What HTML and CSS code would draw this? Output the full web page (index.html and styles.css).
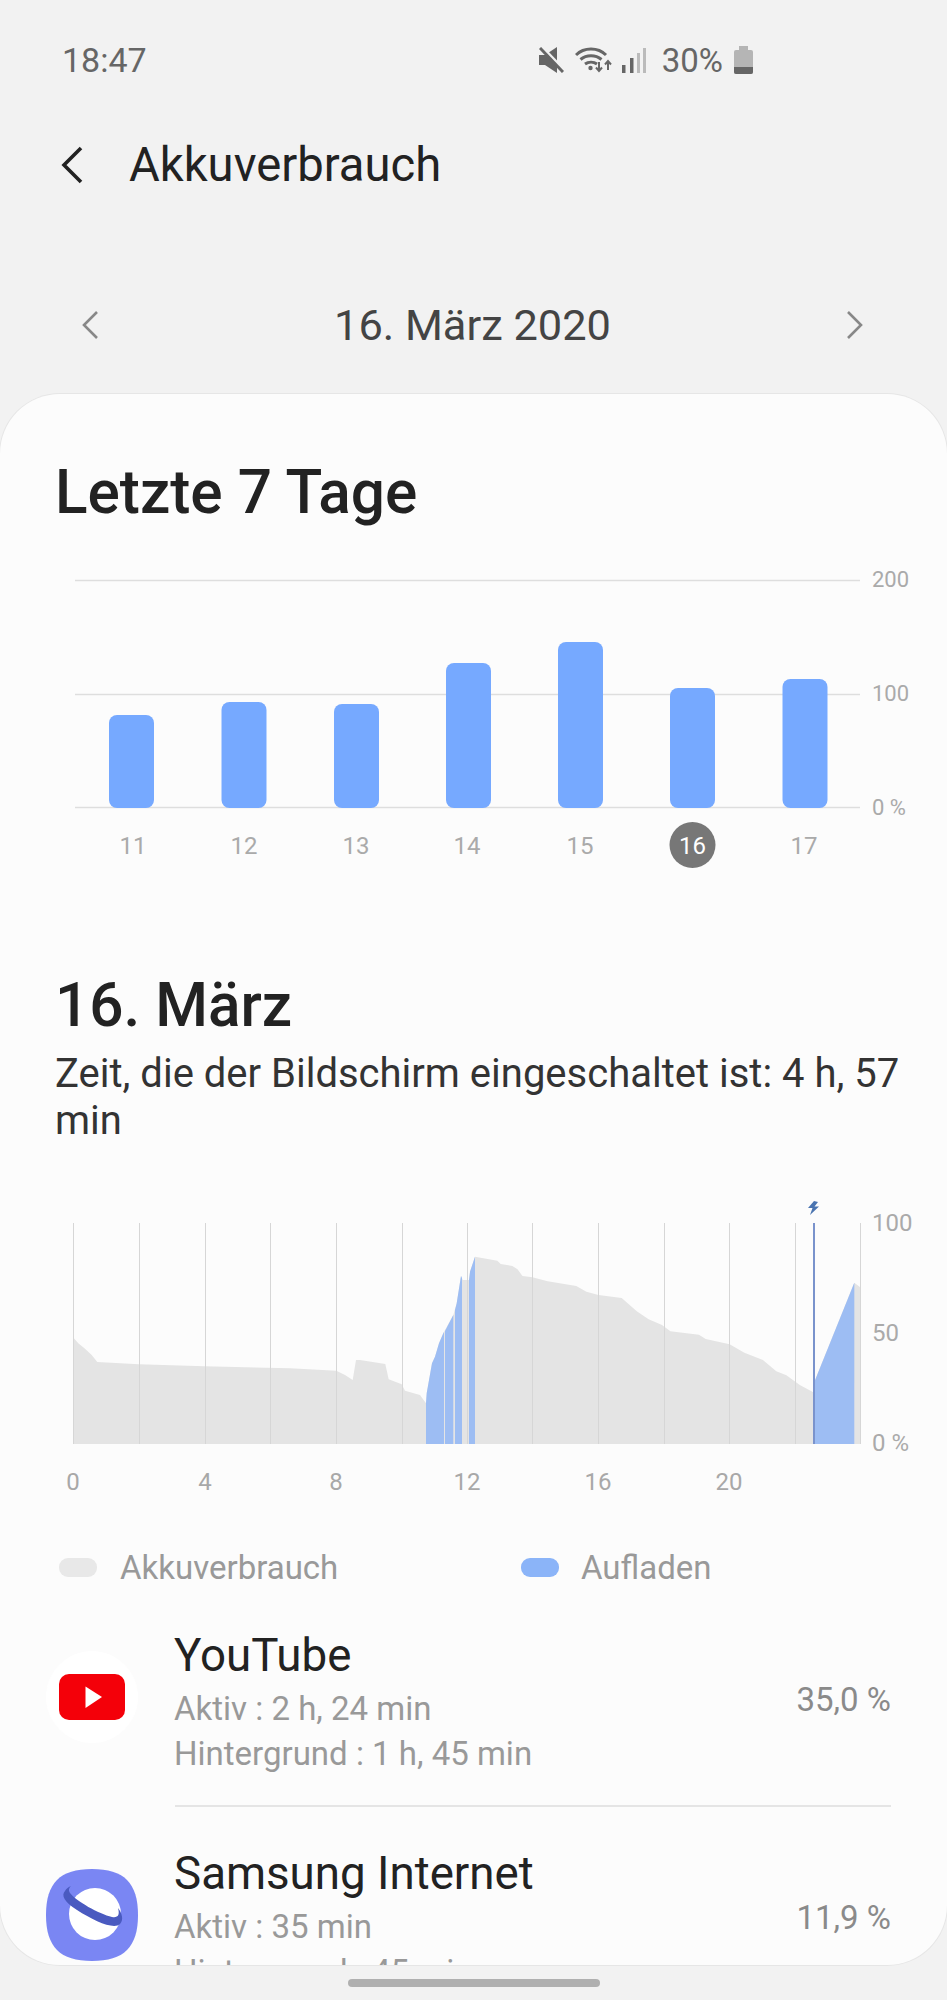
FILE: index.html
```html
<!DOCTYPE html>
<html lang="de">
<head>
    <meta charset="UTF-8">
    <meta name="viewport" content="width=device-width, initial-scale=1.0">
    <title>Akkuverbrauch</title>
    <link rel="stylesheet" href="styles.css">
</head>
<body>
    <div class="status-bar">
        <span class="clock">18:47</span>
        <div class="status-icons">
            <svg width="25" height="26" viewBox="0 0 25 26">
                <path d="M0 8h6L18 0v26L6 18H0z" fill="#666"/>
                <path d="M3 0l23 24" stroke="#f2f2f2" stroke-width="3"/>
                <path d="M1 1l23 24" stroke="#666" stroke-width="3"/>
            </svg>
            <svg class="wifi" width="37" height="26" viewBox="0 0 37 26" fill="none" stroke="#666" stroke-width="3">
                <path d="M1 8c8-8 22-8 30 0"/>
                <path d="M5.500 12.500c6-5 15-5 21 0"/>
                <path d="M10 17c3.500-2.500 8.500-2.500 12 0"/>
                <circle cx="15.500" cy="21" r="2.200" fill="#666" stroke="none"/>
                <path d="M24 15v9M21 20.500l3 3.500 3-3.500" stroke-width="2"/>
                <path d="M33 23v-9M30 17.500l3-3.500 3 3.500" stroke-width="2"/>
            </svg>
            <svg class="signal" width="24" height="25" viewBox="0 0 24 25">
                <rect x="0" y="17" width="3.500" height="8" fill="#666"/>
                <rect x="8" y="10" width="3.500" height="15" fill="#666"/>
                <rect x="15" y="5" width="3" height="20" fill="#bbb"/>
                <rect x="21" y="0" width="3" height="25" fill="#bbb"/>
            </svg>
            <span class="battery-text">30%</span>
            <div class="battery"><div class="battery-cap"></div><div class="battery-body"><div class="battery-level"></div></div></div>
        </div>
    </div>

    <div class="app-bar">
        <svg class="back" width="24" height="38" viewBox="0 0 24 38" fill="none" stroke="#222" stroke-width="3.600">
            <path d="M21 2L4 19l17 17"/>
        </svg>
        <h1>Akkuverbrauch</h1>
    </div>

    <div class="date-nav">
        <svg width="18" height="30" viewBox="0 0 18 30" fill="none" stroke="#888" stroke-width="2.600"><path d="M16 2L3 15l13 13"/></svg>
        <span class="date-label">16. März 2020</span>
        <svg width="18" height="30" viewBox="0 0 18 30" fill="none" stroke="#888" stroke-width="2.600"><path d="M2 2l13 13L2 28"/></svg>
    </div>

    <div class="card">
        <h2>Letzte 7 Tage</h2>

        <!-- coordinates in the chart viewBoxes are page pixels -->
        <svg class="chart chart-week" width="947" height="320" viewBox="0 560 947 320">
            <path class="grid" d="M75 580.500H860M75 694.500H860M75 807.500H860"/>
            <rect class="bar" x="109" y="715" width="45" height="93" rx="8"/>
            <rect class="bar" x="221.500" y="702" width="45" height="106" rx="8"/>
            <rect class="bar" x="334" y="704" width="45" height="104" rx="8"/>
            <rect class="bar" x="446" y="663" width="45" height="145" rx="8"/>
            <rect class="bar" x="558" y="642" width="45" height="166" rx="8"/>
            <rect class="bar" x="670" y="688" width="45" height="120" rx="8"/>
            <rect class="bar" x="782.500" y="679" width="45" height="129" rx="8"/>
            <text class="axis" x="872" y="586.500">200</text>
            <text class="axis" x="872" y="700.500">100</text>
            <text class="axis" x="872" y="814.500">0 %</text>
            <text class="day" x="133" y="853.500">11</text>
            <text class="day" x="244" y="853.500">12</text>
            <text class="day" x="356" y="853.500">13</text>
            <text class="day" x="467" y="853.500">14</text>
            <text class="day" x="580" y="853.500">15</text>
            <circle cx="692.500" cy="845" r="23" fill="#777"/>
            <text class="day day-active" x="692.500" y="853.500">16</text>
            <text class="day" x="804" y="853.500">17</text>
        </svg>

        <h2 class="day-title">16. März</h2>
        <p class="screen-time">Zeit, die der Bildschirm eingeschaltet ist: 4 h, 57 min</p>

        <svg class="chart chart-day" width="947" height="305" viewBox="0 1195 947 305">
            <path class="usage" d="M73 1444V1337.300L78.300 1343.300 85 1348.700 91.700 1355 97.300 1362 139 1364.300 204.300 1366.300 290 1368.300 336.300 1370.700 345 1375 352.700 1380 356 1360 360 1360 385.300 1364 388.700 1379.300 401.700 1384.300 405 1390.700 420 1395 426 1403.300 426.700 1393.300 432 1363.300 435 1356.700 439 1343.300 443.300 1333.300 453.300 1315 456.700 1303.300 461 1276 462.700 1280 469 1280 470 1271.700 475 1256.700 497.300 1260.700 500.700 1264 512.400 1266 517.500 1269.300 522.500 1276 532.300 1277.300 547.700 1281.300 576.300 1286 586.400 1291.700 598.500 1295 621.700 1298 636.800 1311.300 648.600 1319.300 662 1325 670.400 1331.300 699 1334.700 705.700 1339 729.600 1344.300 744.400 1352.700 762.900 1360 776.300 1371.300 786.400 1375.300 799.800 1385 813.300 1392.300 814 1382.700 854.300 1282.700 860.300 1287.300V1444Z"/>
            <path class="hours" d="M73.500 1223V1444M139.500 1223V1444M205.500 1223V1444M270.500 1223V1444M336.500 1223V1444M402.500 1223V1444M467.500 1223V1444M532.500 1223V1444M598.500 1223V1444M664.500 1223V1444M729.500 1223V1444M795.500 1223V1444M860.500 1223V1444"/>
            <path class="charge" d="M426 1444V1403.300L426.700 1393.300 432 1363.300 435 1356.700 439 1343.300 443.300 1333.300 444 1332V1444Z"/>
            <path class="charge" d="M445 1444V1331L453.300 1315V1444Z"/>
            <path class="charge" d="M455 1444V1310L456.700 1303.300 461 1276 462 1278V1444Z"/>
            <path class="charge" d="M469 1444V1280L470 1271.700 475 1256.700V1444Z"/>
            <path class="charge" d="M814 1444V1382.700L854.300 1282.700V1444Z"/>
            <path class="now" d="M814 1223V1444"/>
            <path d="M814 1201L808 1208H812.500L810 1215 819 1206.500H814.500L818 1202z" fill="#4a74b0"/>
            <text class="axis axis-large" x="872" y="1230.500">100</text>
            <text class="axis axis-large" x="872" y="1340.500">50</text>
            <text class="axis axis-large" x="872" y="1450.500">0 %</text>
            <text class="hour" x="73" y="1489.500">0</text>
            <text class="hour" x="205" y="1489.500">4</text>
            <text class="hour" x="336" y="1489.500">8</text>
            <text class="hour" x="467" y="1489.500">12</text>
            <text class="hour" x="598" y="1489.500">16</text>
            <text class="hour" x="729" y="1489.500">20</text>
        </svg>

        <div class="legend">
            <div class="legend-item">
                <span class="swatch swatch-usage"></span>
                <span>Akkuverbrauch</span>
            </div>
            <div class="legend-item">
                <span class="swatch swatch-charge"></span>
                <span>Aufladen</span>
            </div>
        </div>

        <div class="app-row">
            <div class="app-icon youtube">
                <svg width="66" height="46" viewBox="0 0 66 46">
                    <rect width="66" height="46" rx="10" fill="#f40009"/>
                    <path d="M26.500 12.500L43 23 26.500 34z" fill="#fff"/>
                </svg>
            </div>
            <div class="app-text">
                <div class="app-name">YouTube</div>
                <div class="app-detail">Aktiv : 2 h, 24 min</div>
                <div class="app-detail">Hintergrund : 1 h, 45 min</div>
            </div>
            <div class="app-percent">35,0 %</div>
        </div>
        <div class="divider"></div>
        <div class="app-row">
            <div class="app-icon">
                <svg width="92" height="92" viewBox="0 0 92 92">
                    <path d="M46 0C78 0 92 14 92 46S78 92 46 92 0 78 0 46 14 0 46 0z" fill="#7a86f3"/>
                    <circle cx="49" cy="45" r="26" fill="#fff"/>
                    <path d="M19 22C15 26 18 33 31 41 48 52 68 61 74 55 78 51 76 44 72 39 74 46 72 49 66 48 53 45 30 32 24 24 23 22 22 20 25 17 22 18 20 20 19 22z" fill="#4a5ac0"/>
                </svg>
            </div>
            <div class="app-text">
                <div class="app-name">Samsung Internet</div>
                <div class="app-detail">Aktiv : 35 min</div>
                <div class="app-detail">Hintergrund : 45 min</div>
            </div>
            <div class="app-percent">11,9 %</div>
        </div>
    </div>

    <div class="home-pill"></div>
</body>
</html>
```

FILE: styles.css
```css
body {
    font-family: 'Roboto', sans-serif;
    background-color: #f2f2f2;
    margin: 0;
    width: 947px;
    height: 2000px;
    overflow: hidden;
}
.status-bar {
    display: flex;
    justify-content: space-between;
    align-items: center;
    height: 120px;
    padding: 0 194px 0 62px;
    color: #666;
}
.clock {
    font-size: 34px;
}
.status-icons {
    display: flex;
    align-items: center;
}
.wifi {
    margin-left: 11px;
}
.signal {
    margin-left: 10px;
}
.battery-text {
    font-size: 33px;
    margin-left: 16px;
}
.battery {
    margin-left: 11px;
    width: 19px;
}
.battery-cap {
    width: 9px;
    height: 4px;
    margin: 0 auto;
    background: #b5b5b5;
}
.battery-body {
    display: flex;
    align-items: flex-end;
    height: 24px;
    background: #b5b5b5;
    border-radius: 2px;
    overflow: hidden;
}
.battery-level {
    width: 100%;
    height: 7px;
    background: #666;
}
.app-bar {
    display: flex;
    align-items: center;
    height: 90px;
    padding-left: 60px;
}
h1 {
    font-size: 47.200px;
    font-weight: 400;
    color: #222;
    margin: 0 0 0 45px;
}
.date-nav {
    display: flex;
    justify-content: space-between;
    align-items: center;
    height: 106px;
    margin: 62px 0 16px;
    padding: 0 83px 0 81px;
}
.date-label {
    font-size: 43.400px;
    color: #444;
}
.card {
    height: 1571px;
    background: #fcfcfc;
    border-radius: 60px;
    box-shadow: 0 0 0 1px #e6e6e6;
    padding-top: 64px;
    box-sizing: border-box;
    overflow: hidden;
}
h2 {
    font-size: 60.300px;
    font-weight: 500;
    line-height: 70px;
    color: #222;
    margin: 0 0 32px 55px;
}
.chart {
    display: block;
}
.grid {
    stroke: #dedede;
    stroke-width: 1.500;
    fill: none;
}
.bar {
    fill: #76a9ff;
}
.axis {
    font-size: 22px;
    fill: #aaa;
}
.axis-large {
    font-size: 24px;
}
.day {
    font-size: 24px;
    fill: #aaa;
    text-anchor: middle;
}
.day-active {
    fill: #fff;
}
.day-title {
    margin: 91px 0 9px 55px;
}
.screen-time {
    font-size: 40px;
    line-height: 47px;
    color: #333;
    margin: 0 40px 51px 55px;
}
.usage {
    fill: #e4e4e4;
}
.hours {
    stroke: #d6d6d6;
    stroke-width: 1;
    fill: none;
}
.charge {
    fill: #9dbdf3;
}
.now {
    stroke: #7a93cc;
    stroke-width: 2;
}
.hour {
    font-size: 24px;
    fill: #a8a8a8;
    text-anchor: middle;
}
.legend {
    display: flex;
    height: 40px;
    margin: 47px 0 42px 59px;
    font-size: 33px;
    color: #999;
}
.legend-item {
    display: flex;
    align-items: center;
    gap: 23px;
    width: 462px;
    flex-shrink: 0;
}
.legend-item:last-child {
    gap: 22px;
}
.swatch {
    width: 38px;
    height: 19px;
    border-radius: 9px;
}
.swatch-usage {
    background: #e8e8e8;
}
.swatch-charge {
    background: #8bb4f8;
}
.app-row {
    display: flex;
    align-items: flex-start;
    padding-right: 56px;
}
.app-icon {
    display: flex;
    justify-content: center;
    align-items: center;
    width: 92px;
    height: 92px;
    margin: 22px 36px 0 46px;
    flex-shrink: 0;
    border-radius: 50%;
}
.youtube {
    background: #fff;
}
.app-text {
    flex: 1;
}
.app-name {
    font-size: 45.700px;
    line-height: 50px;
    color: #222;
    padding-top: 2px;
    margin-bottom: 5px;
}
.app-detail {
    font-size: 33px;
    line-height: 45px;
    color: #999;
}
.app-percent {
    font-size: 33px;
    color: #8a8a8a;
    margin-top: 51px;
}
.divider {
    height: 2px;
    background: #e5e5e5;
    margin: 29px 56px 40px 175px;
}
.home-pill {
    width: 252px;
    height: 8px;
    margin: 14px auto 0;
    background: #b0b0b0;
    border-radius: 4px;
}
```
